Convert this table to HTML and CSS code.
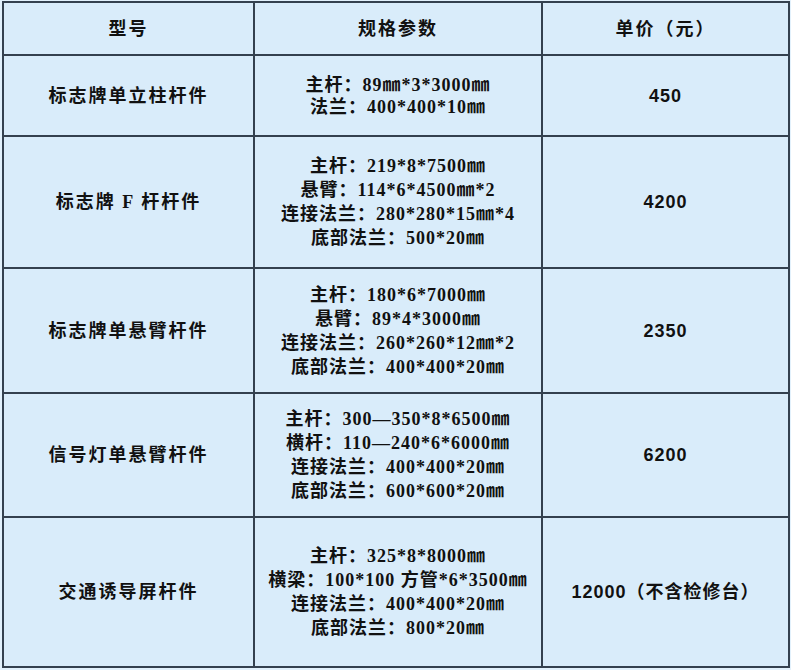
FILE: index.html
```html
<!DOCTYPE html>
<html lang="zh-CN">
<head>
<meta charset="utf-8">
<title>杆件价格表</title>
<link rel="stylesheet" href="styles.css">
</head>
<body>
<table class="price-table">
  <colgroup>
    <col class="c-model">
    <col class="c-spec">
    <col class="c-price">
  </colgroup>
  <thead>
    <tr class="r-head">
      <th>型号</th>
      <th>规格参数</th>
      <th>单价（元）</th>
    </tr>
  </thead>
  <tbody>
    <tr class="r-1">
      <td class="model">标志牌单立柱杆件</td>
      <td class="spec">主杆：89㎜*3*3000㎜<br>法兰：400*400*10㎜</td>
      <td class="price">450</td>
    </tr>
    <tr class="r-2">
      <td class="model">标志牌 F 杆杆件</td>
      <td class="spec">主杆：219*8*7500㎜<br>悬臂：114*6*4500㎜*2<br>连接法兰：280*280*15㎜*4<br>底部法兰：500*20㎜</td>
      <td class="price">4200</td>
    </tr>
    <tr class="r-3">
      <td class="model">标志牌单悬臂杆件</td>
      <td class="spec">主杆：180*6*7000㎜<br>悬臂：89*4*3000㎜<br>连接法兰：260*260*12㎜*2<br>底部法兰：400*400*20㎜</td>
      <td class="price">2350</td>
    </tr>
    <tr class="r-4">
      <td class="model">信号灯单悬臂杆件</td>
      <td class="spec">主杆：300—350*8*6500㎜<br>横杆：110—240*6*6000㎜<br>连接法兰：400*400*20㎜<br>底部法兰：600*600*20㎜</td>
      <td class="price">6200</td>
    </tr>
    <tr class="r-5">
      <td class="model">交通诱导屏杆件</td>
      <td class="spec">主杆：325*8*8000㎜<br>横梁：100*100 方管*6*3500㎜<br>连接法兰：400*400*20㎜<br>底部法兰：800*20㎜</td>
      <td class="price">12000（不含检修台）</td>
    </tr>
  </tbody>
</table>
</body>
</html>
```

FILE: styles.css
```css
html, body {
  margin: 0;
  padding: 0;
  background: #e2f1fc;
}

body {
  padding: 1px 0 0 2px;
  font-family: "Liberation Serif", "Noto Sans CJK SC", serif;
  color: #111111;
}

.price-table {
  border-collapse: collapse;
  width: 786px;
  table-layout: fixed;
  background: #d9ecfa;
}

.c-model { width: 251px; }
.c-spec { width: 288px; }
.c-price { width: 247px; }

.price-table th,
.price-table td {
  border: 2px solid #34414f;
  text-align: center;
  vertical-align: middle;
  padding: 0;
  font-size: 18px;
  font-weight: 700;
  line-height: 24px;
  letter-spacing: 1px;
}

.price-table th,
.price-table .model {
  letter-spacing: 2px;
}

.r-head { height: 53px; }
.r-1 { height: 81px; }
.r-2 { height: 132px; }
.r-3 { height: 125px; }
.r-4 { height: 124px; }
.r-5 { height: 150px; }

.r-1 .spec { line-height: 22px; }

.price {
  font-family: "Liberation Sans", "Noto Sans CJK SC", sans-serif;
}
```
